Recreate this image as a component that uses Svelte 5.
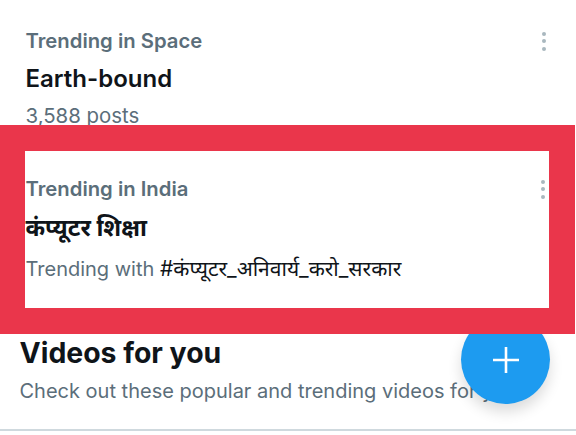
<script>
  const dots = [0, 1, 2];
</script>

<main class="page">
  <section class="trend first">
    <div class="text">
      <div class="label">Trending in Space</div>
      <div class="title">Earth-bound</div>
      <div class="sub">3,588 posts</div>
    </div>
    <div class="more">{#each dots as d}<i></i>{/each}</div>
  </section>

  <section class="highlight">
    <div class="trend inner">
      <div class="text">
        <div class="label">Trending in India</div>
        <div class="title hindi">कंप्यूटर शिक्षा</div>
        <div class="sub with">Trending with <span class="tag">#कंप्यूटर_अनिवार्य_करो_सरकार</span></div>
      </div>
      <div class="more">{#each dots as d}<i></i>{/each}</div>
    </div>
  </section>

  <section class="videos">
    <h2>Videos for you</h2>
    <p>Check out these popular and trending videos for you</p>
  </section>

  <button class="fab" aria-label="New post">
    <svg viewBox="0 0 28 28" width="28" height="28"><path d="M14 1v26M1 14h26" stroke="#fff" stroke-width="2.6" fill="none"/></svg>
  </button>
</main>

<style>
  :global(body) { margin: 0; background: #fff; }
  .page {
    position: relative;
    width: 576px;
    height: 435px;
    overflow: hidden;
    background: #fff;
    font-family: Inter, "Noto Sans", "Liberation Sans", sans-serif;
    color: #0f1419;
  }
  .trend { display: flex; justify-content: space-between; }
  .first { height: 125px; padding: 28px 30px 0 25.5px; box-sizing: border-box; overflow: hidden; }
  .label { font-size: 20.3px; font-weight: 600; line-height: 26px; color: #5b6e7a; }
  .title { font-size: 24px; font-weight: 600; line-height: 30px; margin-top: 10px; }
  .sub { font-size: 20.4px; line-height: 26px; color: #5b6e7a; margin-top: 9px; }
  .more { display: flex; flex-direction: column; gap: 3.4px; width: 4px; padding-top: 4px; }
  .more i { width: 4px; height: 4px; border-radius: 50%; background: #a9b8bf; }
  .highlight {
    position: relative;
    z-index: 1;
    box-sizing: border-box;
    width: 575px;
    height: 209px;
    border: solid #ea364b;
    border-width: 26px 26px 26px 25px;
    background: #fff;
  }
  .inner { padding: 25px 4px 0 0.5px; }
  .hindi { font-size: 23.6px; margin-top: 11px; font-weight: 700; }
  .with { margin-top: 13px; font-size: 20px; }
  .tag { color: #0f1419; font-size: 21px; }
  .videos { height: 97px; box-sizing: border-box; padding: 0 19.5px; border-bottom: 2px solid #cfd9de; white-space: nowrap; }
  h2 { margin: 0; padding-top: 1px; font-size: 28.4px; line-height: 36px; font-weight: 700; }
  p { margin: 7px 0 0; font-size: 20px; line-height: 26px; color: #5b6e7a; }
  .fab {
    position: absolute;
    left: 461px;
    top: 315px;
    width: 89px;
    height: 89px;
    padding: 0;
    border: 0;
    border-radius: 50%;
    background: #1d9bf0;
    box-shadow: 0 8px 14px rgba(0, 0, 0, 0.14);
    display: flex;
    align-items: center;
    justify-content: center;
  }
</style>
